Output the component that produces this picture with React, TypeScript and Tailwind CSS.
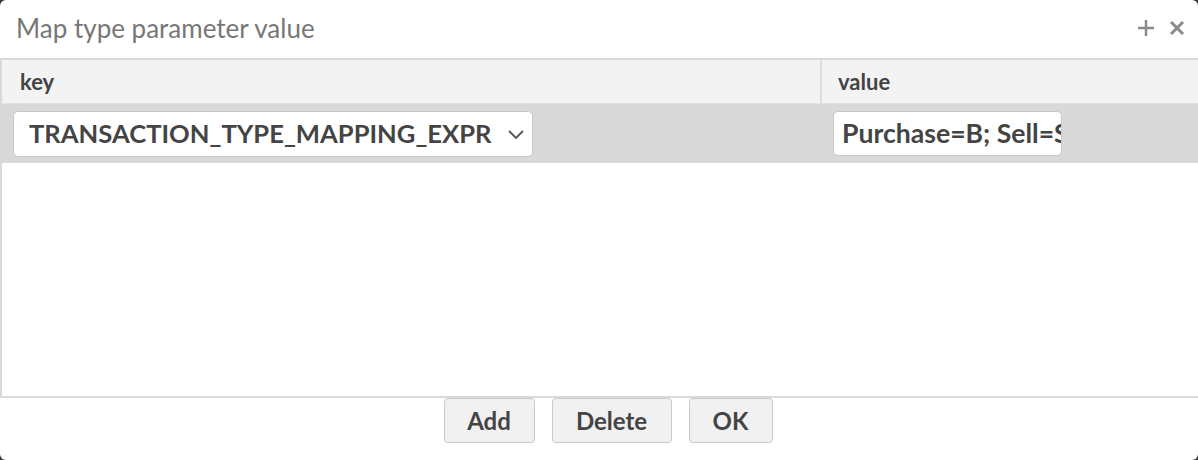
import React from "react";

export default function App() {
  return (
    <div className="w-[1198px] h-[460px] bg-[#3a3a3a] overflow-hidden" style={{ fontFamily: "Lato, 'Noto Sans', sans-serif" }}>
      <div className="w-full h-full bg-white rounded-[6px] flex flex-col">
        <div className="h-[58px] flex items-center justify-between pl-4 pr-[12px] pb-[2px]">
          <span className="text-[26px] text-[#777777]">Map type parameter value</span>
          <div className="flex items-center gap-[12px] text-[#8a8a8a]">
            <svg width="20" height="20" viewBox="0 0 20 20"><path d="M10 2v16M2 10h16" stroke="currentColor" strokeWidth="2.5" /></svg>
            <svg width="18" height="18" viewBox="0 0 18 18"><path d="M3 3l12 12M15 3L3 15" stroke="currentColor" strokeWidth="3" /></svg>
          </div>
        </div>
        <div className="h-[340px] border-t-2 border-l-2 border-b-2 border-[#d9d9d9] flex flex-col">
          <div className="h-[44px] bg-[#f3f3f3] grid grid-cols-[820px_1fr] border-b border-[#e2e2e2]">
            <div className="flex items-center pl-[18px] font-bold text-[22px] text-[#444444] border-r-2 border-[#dcdcdc]">key</div>
            <div className="flex items-center pl-[16px] font-bold text-[22px] text-[#444444]">value</div>
          </div>
          <div className="h-[59px] bg-[#d9d9d9] grid grid-cols-[820px_1fr] items-center">
            <div className="pl-[11px]">
              <div className="w-[520px] h-[46px] bg-white border border-[#c8c8c8] rounded-[5px] flex items-center justify-between pl-[15px] pr-[7px]">
                <span className="font-bold text-[25.6px] text-[#444444] whitespace-nowrap">TRANSACTION_TYPE_MAPPING_EXPR</span>
                <svg width="18" height="12" viewBox="0 0 18 12"><path d="M2 3l7 7 7-7" fill="none" stroke="#555" strokeWidth="1.8" /></svg>
              </div>
            </div>
            <div className="pl-[11px]">
              <div className="w-[229px] h-[45px] bg-white border border-[#c8c8c8] rounded-[5px] flex items-center pl-[8px] overflow-hidden">
                <span className="font-bold text-[26.6px] text-[#444444] whitespace-nowrap">Purchase=B; Sell=S</span>
              </div>
            </div>
          </div>
          <div className="flex-1 bg-white" />
        </div>
        <div className="flex justify-center gap-[17px] pl-[18px]">
          <button className="w-[91px] h-[45px] bg-[#f1f1f1] border border-[#c8c8c8] rounded-[4px] font-bold text-[24px] text-[#444444]">Add</button>
          <button className="w-[120px] h-[45px] bg-[#f1f1f1] border border-[#c8c8c8] rounded-[4px] font-bold text-[24px] text-[#444444]">Delete</button>
          <button className="w-[84px] h-[45px] bg-[#f1f1f1] border border-[#c8c8c8] rounded-[4px] font-bold text-[24px] text-[#444444]">OK</button>
        </div>
      </div>
    </div>
  );
}
